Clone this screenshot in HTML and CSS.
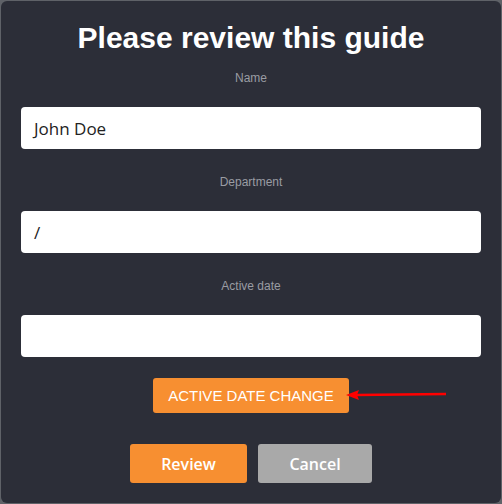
FILE: index.html
```html
<!DOCTYPE html>
<html>
<head>
<meta charset="utf-8">
<link rel="stylesheet" href="styles.css">
</head>
<body>
<div class="modal">
  <h1 class="title">Please review this guide</h1>
  <div class="field">
    <label class="label">Name</label>
    <div class="input">John Doe</div>
  </div>
  <div class="field">
    <label class="label">Department</label>
    <div class="input">/</div>
  </div>
  <div class="field">
    <label class="label">Active date</label>
    <div class="input"></div>
  </div>
  <div class="change-row">
    <button class="btn-change">ACTIVE DATE CHANGE</button>
    <svg class="arrow" width="104" height="14" viewBox="0 0 104 14">
      <path d="M10 7 L100 6" stroke="#ff0000" stroke-width="2.5" fill="none"/>
      <path d="M0 7 L13 2 L11 7 L13 12 Z" fill="#ff0000"/>
    </svg>
  </div>
  <div class="actions">
    <button class="btn btn-review">Review</button>
    <button class="btn btn-cancel">Cancel</button>
  </div>
</div>
</body>
</html>
```

FILE: styles.css
```css
html, body {
  margin: 0;
  padding: 0;
}
body {
  background: #5f6268;
  width: 502px;
  height: 504px;
  overflow: hidden;
}
.modal {
  margin: 1px;
  width: 500px;
  height: 502px;
  box-sizing: border-box;
  background: #2c2e38;
  border-radius: 6px;
  padding: 18px 20px 20px;
  font-family: "Liberation Sans", Arial, sans-serif;
}
.title {
  margin: 0 0 14px;
  font-size: 30px;
  line-height: 38px;
  font-weight: bold;
  color: #ffffff;
  text-align: center;
}
.field {
  display: flex;
  flex-direction: column;
  margin-bottom: 26px;
}
.label {
  font-size: 12px;
  line-height: 14px;
  color: #9a9ca3;
  text-align: center;
  margin-bottom: 22px;
}
.input {
  height: 42px;
  box-sizing: border-box;
  background: #ffffff;
  border-radius: 4px;
  padding: 1px 13px 0;
  font-family: "Open Sans", sans-serif;
  font-size: 17px;
  line-height: 42px;
  color: #222222;
}
.field:nth-of-type(3) {
  margin-bottom: 21px;
}
.change-row {
  position: relative;
  display: flex;
  justify-content: center;
}
.btn-change {
  width: 196px;
  height: 35px;
  border: none;
  border-radius: 3px;
  background: #f78f31;
  color: #ffffff;
  font-family: "Liberation Sans", Arial, sans-serif;
  font-size: 15px;
  padding: 0;
}
.arrow {
  position: absolute;
  left: 325px;
  top: 10px;
}
.actions {
  display: flex;
  justify-content: center;
  gap: 11px;
  margin-top: 31px;
}
.btn {
  height: 39px;
  border: none;
  border-radius: 3px;
  color: #ffffff;
  font-family: "Open Sans", sans-serif;
  font-weight: 600;
  font-size: 16px;
  padding: 0;
}
.btn-review {
  width: 117px;
  background: #f78f31;
}
.btn-cancel {
  width: 114px;
  background: #a9a9a9;
}
```
